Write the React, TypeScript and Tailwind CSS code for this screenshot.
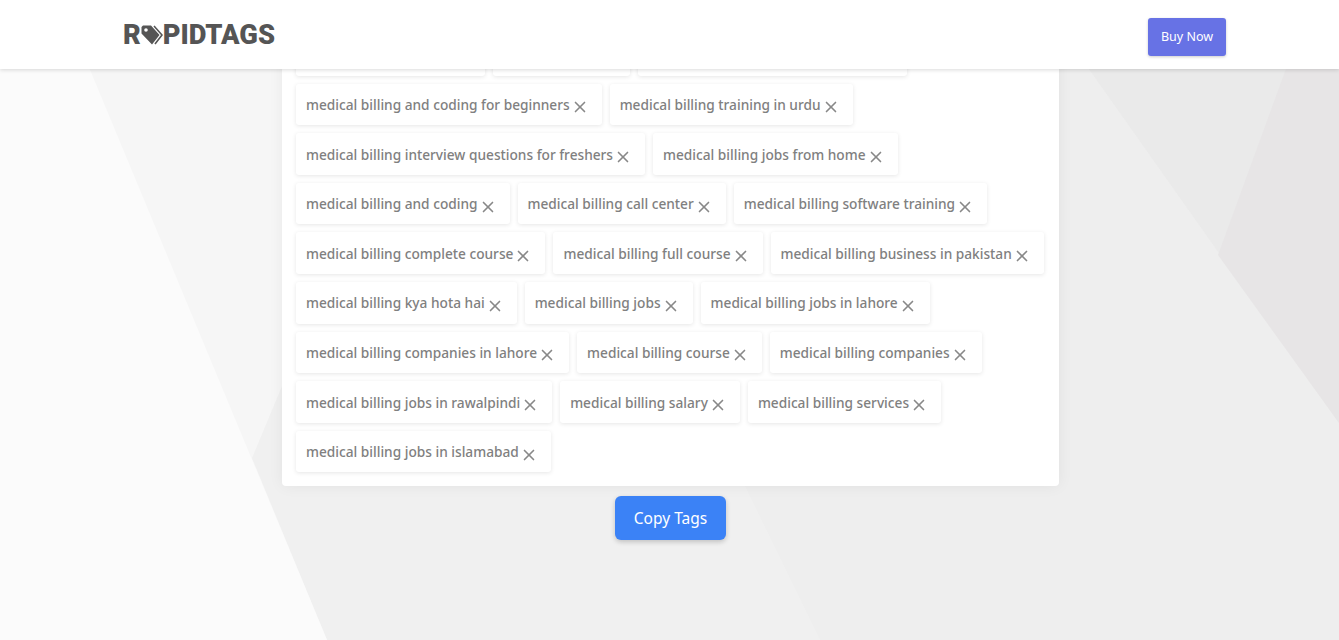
import { X } from "lucide-react";

const tags = [
  "medical billing tutorial",
  "medical billing",
  "medical billing and coding training",
  "medical billing and coding for beginners",
  "medical billing training in urdu",
  "medical billing interview questions for freshers",
  "medical billing jobs from home",
  "medical billing and coding",
  "medical billing call center",
  "medical billing software training",
  "medical billing complete course",
  "medical billing full course",
  "medical billing business in pakistan",
  "medical billing kya hota hai",
  "medical billing jobs",
  "medical billing jobs in lahore",
  "medical billing companies in lahore",
  "medical billing course",
  "medical billing companies",
  "medical billing jobs in rawalpindi",
  "medical billing salary",
  "medical billing services",
  "medical billing jobs in islamabad",
];

const Background = () => (
  <svg className="absolute inset-0 h-full w-full" viewBox="0 0 1339 640" aria-hidden="true">
    <rect width="1339" height="640" fill="#f0f0f0" />
    <polygon points="0,0 282,0 282,386 252,458 327,640 0,640" fill="#f6f6f6" />
    <polygon points="0,0 61,0 327,640 0,640" fill="#fbfbfb" />
    <polygon points="700,394 700,0 1339,0 1339,640 820,640" fill="#eeeeee" />
    <polygon points="1050,14 1339,14 1339,423" fill="#eaeaea" />
    <polygon points="1311,0 1339,0 1339,423 1218,255" fill="#e7e5e6" />
  </svg>
);

const Logo = () => (
  <div className="flex items-center pt-0.5 font-['Roboto',sans-serif] text-[27.3px] leading-none font-black text-[#555555]">
    <span>R</span>
    <svg width="22" height="20" viewBox="0 0 22 20" aria-hidden="true">
      <path
        fillRule="evenodd"
        fill="#555555"
        d="M2 0.5H10L18.5 10L11 19.5L0.5 8.5V2ZM5 3.2a1.8 1.8 0 1 0 0 3.6a1.8 1.8 0 1 0 0-3.6Z"
      />
      <path d="M13 1L21 10L14 19" fill="none" stroke="#555555" strokeWidth="1.6" />
    </svg>
    <span>PIDTAGS</span>
  </div>
);

const App = () => {
  return (
    <div className="relative h-screen overflow-hidden font-['Noto_Sans',sans-serif]">
      <Background />

      {/* Header */}
      <header className="relative z-10 flex h-[69px] items-center justify-between bg-white pr-[113px] pl-[123px] shadow-[0_1px_4px_rgba(0,0,0,0.15)]">
        <Logo />
        <button className="mt-1 h-[38px] w-[78px] rounded-[3px] bg-[#6772e5] pt-0.5 text-[12.5px] text-white shadow-[0_1px_3px_rgba(0,0,0,0.2)]">
          Buy Now
        </button>
      </header>

      <main className="relative ml-[282px] -mt-[49px] w-[777px]">
        <div className="flex flex-wrap gap-x-2 gap-y-[8px] rounded-[4px] bg-white p-[14px] shadow-[0_0_15px_rgba(0,0,0,0.06)]">
          {tags.map((tag) => (
            <div
              key={tag}
              className="flex h-[41.6px] items-center rounded-[3px] bg-white pt-0.5 pr-[12px] pl-[10px] text-[13.7px] font-medium text-[#808080] shadow-[0_1px_4px_rgba(0,0,0,0.1)]"
            >
              <span>{tag}</span>
              <X className="mx-px mt-1 text-[#888888]" size={18} strokeWidth={2.2} />
            </div>
          ))}
        </div>

        {/* Copy button */}
        <div className="mt-[10px] flex justify-center">
          <button className="h-[44px] w-[111px] rounded-md bg-[#3b82f6] text-[15.5px] text-white shadow-[0_2px_5px_rgba(0,0,0,0.2)]">
            Copy Tags
          </button>
        </div>
      </main>
    </div>
  );
};

export default App;
